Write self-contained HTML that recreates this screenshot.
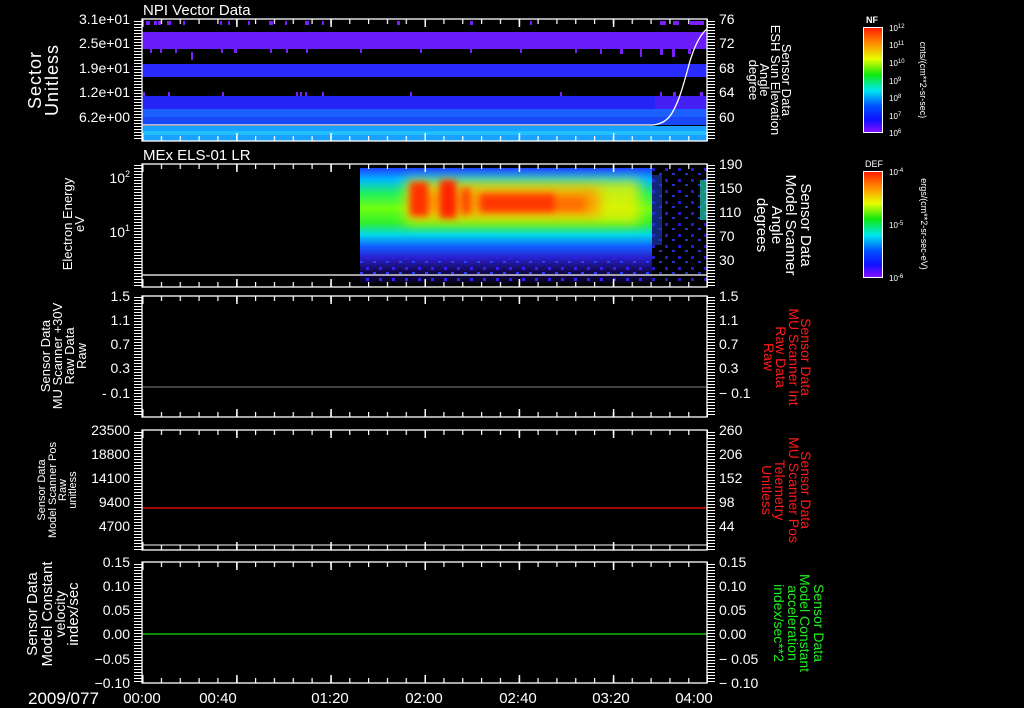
<!DOCTYPE html>
<html><head><meta charset="utf-8"><style>
html,body{margin:0;padding:0;background:#000;width:1024px;height:708px;overflow:hidden}
svg{display:block}
text{font-family:"Liberation Sans","DejaVu Sans",sans-serif;fill:#fff}
text.r{fill:#ff1a1a}
text.g{fill:#20ee20}
</style></head><body>
<svg width="1024" height="708" viewBox="0 0 1024 708" xmlns="http://www.w3.org/2000/svg">
<defs>
<pattern id="vr" x="0" y="0" width="8" height="3" patternUnits="userSpaceOnUse"><rect x="0" y="0" width="8" height="1" fill="#fff"/></pattern>
<pattern id="tm" x="142" y="0" width="18.833" height="10" patternUnits="userSpaceOnUse"><rect x="0" y="0" width="1.2" height="10" fill="#fff"/></pattern>
<pattern id="tM" x="142" y="0" width="94.17" height="10" patternUnits="userSpaceOnUse"><rect x="0" y="0" width="1.5" height="10" fill="#fff"/></pattern>
<pattern id="dots" x="0" y="0" width="13" height="11" patternUnits="userSpaceOnUse"><rect x="2" y="3" width="3" height="3" fill="#3020ff"/><rect x="9" y="8" width="3" height="2" fill="#2a40ff"/></pattern>
<linearGradient id="rb" x1="0" y1="0" x2="0" y2="1">
<stop offset="0" stop-color="#ff1a00"/><stop offset="0.15" stop-color="#ff8c00"/><stop offset="0.3" stop-color="#e8ff00"/><stop offset="0.45" stop-color="#10e810"/><stop offset="0.6" stop-color="#00e8f0"/><stop offset="0.75" stop-color="#0050ff"/><stop offset="0.88" stop-color="#1010ff"/><stop offset="1" stop-color="#8a10ff"/></linearGradient>
<linearGradient id="sp" x1="0" y1="168" x2="0" y2="283" gradientUnits="userSpaceOnUse">
<stop offset="0" stop-color="#1e40ff"/><stop offset="0.1" stop-color="#00b8ff"/><stop offset="0.22" stop-color="#20f060"/><stop offset="0.35" stop-color="#70ff10"/><stop offset="0.48" stop-color="#30f030"/><stop offset="0.58" stop-color="#00d8e8"/><stop offset="0.68" stop-color="#1060ff"/><stop offset="0.78" stop-color="#2a20d0"/><stop offset="0.9" stop-color="#140850"/><stop offset="1" stop-color="#080420"/></linearGradient>
<filter id="bl" filterUnits="userSpaceOnUse" x="340" y="150" width="340" height="120"><feGaussianBlur stdDeviation="6"/></filter>
<filter id="bl2" filterUnits="userSpaceOnUse" x="340" y="150" width="340" height="120"><feGaussianBlur stdDeviation="3.5"/></filter>
</defs>

<text x="143" y="15" font-size="15">NPI Vector Data</text>
<text x="143" y="160" font-size="15">MEx ELS-01 LR</text>

<!-- Panel 1 bands -->
<rect x="142" y="32" width="565" height="17" fill="#6a1cf8"/>
<rect x="142" y="64" width="565" height="13" fill="#2a2cff"/>
<rect x="142" y="96" width="565" height="13" fill="#2424f4"/>
<rect x="142" y="109" width="565" height="8" fill="#1c60ff"/>
<rect x="142" y="117" width="565" height="8" fill="#1848f8"/>
<rect x="142" y="126" width="565" height="15" fill="#1aa0ff"/>
<rect x="142" y="131" width="565" height="4" fill="#20c0ff"/>
<g fill="#7a20ff">
<rect x="146" y="21" width="4" height="4"/><rect x="154" y="21" width="3" height="4"/><rect x="158" y="21" width="3" height="4"/><rect x="167" y="21" width="4" height="4"/><rect x="183" y="21" width="2" height="4"/><rect x="220" y="21" width="2" height="4"/><rect x="228" y="21" width="2" height="4"/><rect x="248" y="21" width="2" height="4"/><rect x="269" y="21" width="4" height="4"/><rect x="285" y="21" width="2" height="4"/><rect x="305" y="21" width="4" height="4"/><rect x="322" y="21" width="2" height="4"/>
<rect x="397" y="21" width="3" height="4"/><rect x="470" y="21" width="3" height="4"/><rect x="530" y="21" width="2" height="4"/><rect x="660" y="21" width="6" height="4"/><rect x="673" y="21" width="6" height="4"/><rect x="690" y="21" width="14" height="4"/>
<rect x="150" y="49" width="2" height="4"/><rect x="160" y="49" width="2" height="4"/><rect x="175" y="49" width="2" height="4"/><rect x="191" y="52" width="2" height="8"/><rect x="221" y="49" width="2" height="4"/><rect x="234" y="49" width="3" height="4"/><rect x="270" y="49" width="2" height="4"/><rect x="286" y="49" width="2" height="4"/><rect x="306" y="49" width="2" height="4"/>
<rect x="360" y="49" width="2" height="4"/><rect x="420" y="49" width="2" height="4"/><rect x="470" y="49" width="2" height="4"/><rect x="520" y="49" width="2" height="4"/><rect x="575" y="49" width="2" height="4"/><rect x="600" y="49" width="2" height="5"/><rect x="620" y="49" width="3" height="5"/><rect x="640" y="49" width="2" height="8"/><rect x="660" y="49" width="3" height="6"/><rect x="672" y="49" width="3" height="8"/><rect x="688" y="49" width="3" height="5"/>
<rect x="143" y="92" width="2" height="4"/><rect x="168" y="92" width="2" height="4"/><rect x="222" y="92" width="2" height="4"/><rect x="296" y="92" width="2" height="4"/><rect x="300" y="92" width="2" height="4"/><rect x="305" y="92" width="2" height="4"/><rect x="322" y="92" width="2" height="4"/><rect x="410" y="92" width="2" height="4"/><rect x="560" y="92" width="2" height="4"/><rect x="660" y="92" width="2" height="4"/><rect x="673" y="92" width="3" height="4"/><rect x="700" y="92" width="3" height="4"/>
</g>
<rect x="655" y="96" width="52" height="13" fill="#5a20f0" opacity="0.6"/>
<path d="M142,125 L653,125 C662,124 668,120 672,113 C678,103 682,90 687,72 C692,52 698,36 707,29" fill="none" stroke="#fff" stroke-width="1.3"/>

<!-- Panel 2 spectrogram -->
<rect x="360" y="168" width="292" height="115" fill="url(#sp)"/>
<rect x="360" y="258" width="292" height="25" fill="url(#dots)"/>
<rect x="652" y="168" width="55" height="115" fill="url(#dots)" opacity="0.8"/>
<rect x="652" y="175" width="10" height="70" fill="#2040d0" opacity="0.6"/>
<rect x="700" y="180" width="7" height="40" fill="#20d0b0" opacity="0.7"/>
<g filter="url(#bl)">
<rect x="405" y="180" width="235" height="44" fill="#f0f000" opacity="0.8"/>
<rect x="410" y="188" width="190" height="28" fill="#ff9000" opacity="0.9"/>
</g>
<g filter="url(#bl2)">
<rect x="410" y="182" width="18" height="34" fill="#ff3000"/>
<rect x="440" y="180" width="16" height="38" fill="#ff2000"/>
<rect x="462" y="188" width="8" height="26" fill="#ff4000"/>
<rect x="480" y="194" width="75" height="18" fill="#ff3800"/>
<rect x="555" y="197" width="30" height="14" fill="#ff7000"/>
</g>
<line x1="142" y1="275" x2="707" y2="275" stroke="#fff" stroke-width="1.3"/>

<line x1="142" y1="387" x2="707" y2="387" stroke="#808080" stroke-width="1"/>
<line x1="142" y1="508" x2="707" y2="508" stroke="#ff1010" stroke-width="1.3"/>
<line x1="142" y1="634" x2="707" y2="634" stroke="#10e010" stroke-width="1.3"/>
<line x1="142" y1="545" x2="707" y2="545" stroke="#fff" stroke-width="1"/>

<g stroke="#fff" stroke-width="1.3" fill="none">
<rect x="142" y="19" width="565" height="122"/>
<rect x="142" y="164" width="565" height="123"/>
<rect x="142" y="296" width="565" height="121"/>
<rect x="142" y="430" width="565" height="120"/>
<rect x="142" y="562" width="565" height="121"/>
</g>
<g>
<rect x="134" y="19" width="8" height="122" fill="url(#vr)"/><rect x="707" y="19" width="8" height="122" fill="url(#vr)"/>
<rect x="134" y="164" width="8" height="123" fill="url(#vr)"/><rect x="707" y="164" width="8" height="123" fill="url(#vr)"/>
<rect x="134" y="296" width="8" height="121" fill="url(#vr)"/><rect x="707" y="296" width="8" height="121" fill="url(#vr)"/>
<rect x="134" y="430" width="8" height="120" fill="url(#vr)"/><rect x="707" y="430" width="8" height="120" fill="url(#vr)"/>
<rect x="134" y="562" width="8" height="121" fill="url(#vr)"/><rect x="707" y="562" width="8" height="121" fill="url(#vr)"/>
<rect x="142" y="19" width="565" height="5" fill="url(#tm)"/><rect x="142" y="19" width="566" height="8" fill="url(#tM)"/>
<rect x="142" y="136" width="565" height="5" fill="url(#tm)"/><rect x="142" y="133" width="566" height="8" fill="url(#tM)"/>
<rect x="142" y="164" width="565" height="5" fill="url(#tm)"/><rect x="142" y="164" width="566" height="8" fill="url(#tM)"/>
<rect x="142" y="282" width="565" height="5" fill="url(#tm)"/><rect x="142" y="279" width="566" height="8" fill="url(#tM)"/>
<rect x="142" y="296" width="565" height="5" fill="url(#tm)"/><rect x="142" y="296" width="566" height="8" fill="url(#tM)"/>
<rect x="142" y="412" width="565" height="5" fill="url(#tm)"/><rect x="142" y="409" width="566" height="8" fill="url(#tM)"/>
<rect x="142" y="430" width="565" height="5" fill="url(#tm)"/><rect x="142" y="430" width="566" height="8" fill="url(#tM)"/>
<rect x="142" y="545" width="565" height="5" fill="url(#tm)"/><rect x="142" y="542" width="566" height="8" fill="url(#tM)"/>
<rect x="142" y="562" width="565" height="5" fill="url(#tm)"/><rect x="142" y="562" width="566" height="8" fill="url(#tM)"/>
<rect x="142" y="678" width="565" height="5" fill="url(#tm)"/><rect x="142" y="675" width="566" height="8" fill="url(#tM)"/>
</g>

<g font-size="14" text-anchor="end">
<text x="130" y="24">3.1e+01</text><text x="130" y="48">2.5e+01</text><text x="130" y="73">1.9e+01</text><text x="130" y="97">1.2e+01</text><text x="130" y="122">6.2e+00</text>
<text x="130" y="183">10<tspan font-size="9" dy="-6">2</tspan></text><text x="130" y="237">10<tspan font-size="9" dy="-6">1</tspan></text>
<text x="130" y="301">1.5</text><text x="130" y="325">1.1</text><text x="130" y="349">0.7</text><text x="130" y="373">0.3</text><text x="130" y="398">- 0.1</text>
<text x="130" y="435">23500</text><text x="130" y="459">18800</text><text x="130" y="483">14100</text><text x="130" y="507">9400</text><text x="130" y="531">4700</text>
<text x="130" y="567">0.15</text><text x="130" y="591">0.10</text><text x="130" y="615">0.05</text><text x="130" y="639">0.00</text><text x="130" y="664">−0.05</text><text x="130" y="688">−0.10</text>
</g>
<g font-size="14">
<text x="719" y="24">76</text><text x="719" y="48">72</text><text x="719" y="73">68</text><text x="719" y="97">64</text><text x="719" y="122">60</text>
<text x="719" y="169">190</text><text x="719" y="193">150</text><text x="719" y="217">110</text><text x="719" y="241">70</text><text x="719" y="265">30</text>
<text x="719" y="301">1.5</text><text x="719" y="325">1.1</text><text x="719" y="349">0.7</text><text x="719" y="373">0.3</text><text x="719" y="398">− 0.1</text>
<text x="719" y="435">260</text><text x="719" y="459">206</text><text x="719" y="483">152</text><text x="719" y="507">98</text><text x="719" y="531">44</text>
<text x="719" y="567">0.15</text><text x="719" y="591">0.10</text><text x="719" y="615">0.05</text><text x="719" y="639">0.00</text><text x="719" y="664">− 0.05</text><text x="719" y="688">− 0.10</text>
</g>

<g text-anchor="middle">
<text transform="translate(41,80) rotate(-90)" font-size="18" letter-spacing="1">Sector</text>
<text transform="translate(58,80) rotate(-90)" font-size="18" letter-spacing="1">Unitless</text>
<text transform="translate(72,224) rotate(-90)" font-size="13">Electron Energy</text>
<text transform="translate(84,224) rotate(-90)" font-size="13">eV</text>
<text transform="translate(50,356) rotate(-90)" font-size="13">Sensor Data</text>
<text transform="translate(62,356) rotate(-90)" font-size="13">MU Scanner +30V</text>
<text transform="translate(74,356) rotate(-90)" font-size="13">Raw Data</text>
<text transform="translate(86,356) rotate(-90)" font-size="13">Raw</text>
<text transform="translate(45,490) rotate(-90)" font-size="11">Sensor Data</text>
<text transform="translate(56,490) rotate(-90)" font-size="11">Model Scanner Pos</text>
<text transform="translate(66,490) rotate(-90)" font-size="11">Raw</text>
<text transform="translate(76,490) rotate(-90)" font-size="11">unitless</text>
<text transform="translate(37,614) rotate(-90)" font-size="15">Sensor Data</text>
<text transform="translate(52,614) rotate(-90)" font-size="15">Model Constant</text>
<text transform="translate(65,614) rotate(-90)" font-size="14">velocity</text>
<text transform="translate(78,614) rotate(-90)" font-size="15">index/sec</text>
</g>

<g text-anchor="middle">
<text transform="translate(782,80) rotate(90)" font-size="13">Sensor Data</text>
<text transform="translate(771,80) rotate(90)" font-size="13">ESH Sun Elevation</text>
<text transform="translate(760,80) rotate(90)" font-size="13">Angle</text>
<text transform="translate(749,80) rotate(90)" font-size="13">degree</text>
<text transform="translate(801,225) rotate(90)" font-size="15">Sensor Data</text>
<text transform="translate(786,225) rotate(90)" font-size="15">Model Scanner</text>
<text transform="translate(772,225) rotate(90)" font-size="15">Angle</text>
<text transform="translate(757,225) rotate(90)" font-size="15">degrees</text>
<text class="r" transform="translate(801,357) rotate(90)" font-size="14">Sensor Data</text>
<text class="r" transform="translate(789,357) rotate(90)" font-size="14">MU Scanner Int</text>
<text class="r" transform="translate(776,357) rotate(90)" font-size="14">Raw Data</text>
<text class="r" transform="translate(764,357) rotate(90)" font-size="14">Raw</text>
<text class="r" transform="translate(801,490) rotate(90)" font-size="14">Sensor Data</text>
<text class="r" transform="translate(789,490) rotate(90)" font-size="14">MU Scanner Pos</text>
<text class="r" transform="translate(775,490) rotate(90)" font-size="14">Telemetry</text>
<text class="r" transform="translate(762,490) rotate(90)" font-size="14">Unitless</text>
<text class="g" transform="translate(814,623) rotate(90)" font-size="14">Sensor Data</text>
<text class="g" transform="translate(800,623) rotate(90)" font-size="14">Model Constant</text>
<text class="g" transform="translate(788,623) rotate(90)" font-size="14">acceleration</text>
<text class="g" transform="translate(774,623) rotate(90)" font-size="14">index/sec**2</text>
</g>

<g font-size="15" text-anchor="middle">
<text x="142" y="703">00:00</text><text x="218" y="703">00:40</text><text x="330" y="703">01:20</text><text x="424" y="703">02:00</text><text x="518" y="703">02:40</text><text x="611" y="703">03:20</text><text x="694" y="703">04:00</text>
</g>
<text x="28" y="704" font-size="17">2009/077</text>

<text x="866" y="23" font-size="9" font-weight="bold">NF</text>
<rect x="863.5" y="27.5" width="19" height="105" fill="url(#rb)" stroke="#fff" stroke-width="1"/>
<g font-size="8">
<text x="889" y="31">10<tspan font-size="6" dy="-3">12</tspan></text><text x="889" y="48">10<tspan font-size="6" dy="-3">11</tspan></text><text x="889" y="66">10<tspan font-size="6" dy="-3">10</tspan></text><text x="889" y="84">10<tspan font-size="6" dy="-3">9</tspan></text><text x="889" y="101">10<tspan font-size="6" dy="-3">8</tspan></text><text x="889" y="119">10<tspan font-size="6" dy="-3">7</tspan></text><text x="889" y="136">10<tspan font-size="6" dy="-3">6</tspan></text>
</g>
<text transform="translate(920,80) rotate(90)" font-size="9" text-anchor="middle">cnts/(cm**2-sr-sec)</text>
<text x="865" y="167" font-size="9">DEF</text>
<rect x="863.5" y="171.5" width="19" height="106" fill="url(#rb)" stroke="#fff" stroke-width="1"/>
<g font-size="8">
<text x="889" y="175">10<tspan font-size="6" dy="-3">-4</tspan></text><text x="889" y="228">10<tspan font-size="6" dy="-3">-5</tspan></text><text x="889" y="281">10<tspan font-size="6" dy="-3">-6</tspan></text>
</g>
<text transform="translate(921,224) rotate(90)" font-size="9" text-anchor="middle">ergs/(cm**2-sr-sec-eV)</text>
</svg>
</body></html>
